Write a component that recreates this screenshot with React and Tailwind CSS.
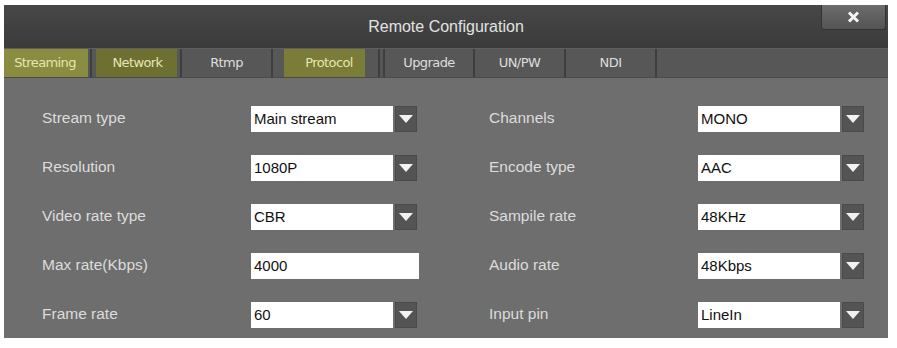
const tabs = [
  { label: "Streaming", w: 88, fill: [0, 84], color: "bg-[#8a8c40]" },
  { label: "Network", w: 90, fill: [4, 85], color: "bg-[#6e7032]" },
  { label: "Rtmp", w: 91 },
  { label: "Protocol", w: 107, fill: [11, 92], color: "bg-[#7a7c38]" },
  { label: "", w: 5 },
  { label: "Upgrade", w: 90 },
  { label: "UN/PW", w: 91 },
  { label: "NDI", w: 91 },
];

const left = [
  { label: "Stream type", value: "Main stream" },
  { label: "Resolution", value: "1080P" },
  { label: "Video rate type", value: "CBR" },
  { label: "Max rate(Kbps)", value: "4000", input: true },
  { label: "Frame rate", value: "60" },
];

const right = [
  { label: "Channels", value: "MONO" },
  { label: "Encode type", value: "AAC" },
  { label: "Sampile rate", value: "48KHz" },
  { label: "Audio rate", value: "48Kbps" },
  { label: "Input pin", value: "LineIn" },
];

function Field({ value, input }) {
  if (input) {
    return (
      <div className="w-[168px] h-[26px] bg-white flex items-center pl-[3px] text-[15px] text-[#111]">
        {value}
      </div>
    );
  }
  return (
    <div className="flex h-[26px] gap-[2px]">
      <div className="w-[142px] h-full bg-white flex items-center pl-[3px] text-[15px] text-[#111]">
        {value}
      </div>
      <div className="w-[22px] h-full bg-[#545454] border border-[#4a4a4a] flex items-center justify-center">
        <svg width="14" height="8" viewBox="0 0 14 8">
          <path d="M0 0 H14 L7 8 Z" fill="#f2f2f2" />
        </svg>
      </div>
    </div>
  );
}

function Column({ rows }) {
  return (
    <div className="flex flex-col gap-[23px]">
      {rows.map((r) => (
        <div key={r.label} className="flex items-center h-[26px]">
          <div className="w-[209px] text-[15.5px] text-[#dcdcdc] -mt-[2px]">{r.label}</div>
          <Field value={r.value} input={r.input} />
        </div>
      ))}
    </div>
  );
}

export default function App() {
  return (
    <div className="w-[897px] h-[348px] bg-white pt-[5px] pl-[4px]" style={{ fontFamily: '"Liberation Sans", Arial, sans-serif' }}>
      <div className="w-[884px] h-[333px] flex flex-col bg-[#6e6e6e]">
        {/* title bar */}
        <div className="relative h-[43px] bg-gradient-to-b from-[#474747] to-[#3b3b3b] flex items-center justify-center">
          <span className="text-[16px] text-[#e2e2e2] mt-[1px]">Remote Configuration</span>
          <div className="absolute right-[2px] top-0 w-[65px] h-[25px] rounded-b-[3px] border border-t-0 border-[#333] bg-gradient-to-b from-[#6c6c6c] to-[#545454] flex items-center justify-center">
            <svg width="13" height="12" viewBox="0 0 13 12">
              <path d="M2 1.5 L11 10.5 M11 1.5 L2 10.5" stroke="#f4f4f4" strokeWidth="3" />
            </svg>
          </div>
        </div>
        {/* tabs */}
        <div className="h-[30px] flex bg-[#575757] border-t border-[#5e5e5e] border-b border-b-[#4a4a4a]" style={{ fontFamily: '"DejaVu Sans", Verdana, sans-serif' }}>
          {tabs.map((t, i) => (
            <div
              key={i}
              className="relative h-full border-r-[2px] border-[#3e3e3e] flex items-center justify-center text-[13px] tracking-[-0.6px] text-[#dedede]"
              style={{ width: t.w }}
            >
              {t.fill && (
                <div
                  className={`absolute top-0 bottom-0 ${t.color}`}
                  style={{ left: t.fill[0], width: t.fill[1] - t.fill[0] }}
                />
              )}
              <span
                className={`relative ${t.fill ? "text-[#e4e6b0]" : ""}`}
                style={t.fill ? { marginLeft: t.fill[0] * 2 - (t.w - t.fill[1]) } : undefined}
              >
                {t.label}
              </span>
            </div>
          ))}
          <div className="flex-1" />
        </div>
        {/* content */}
        <div className="flex-1 flex pl-[38px] pt-[28px]">
          <div className="w-[447px]">
            <Column rows={left} />
          </div>
          <Column rows={right} />
        </div>
      </div>
    </div>
  );
}
